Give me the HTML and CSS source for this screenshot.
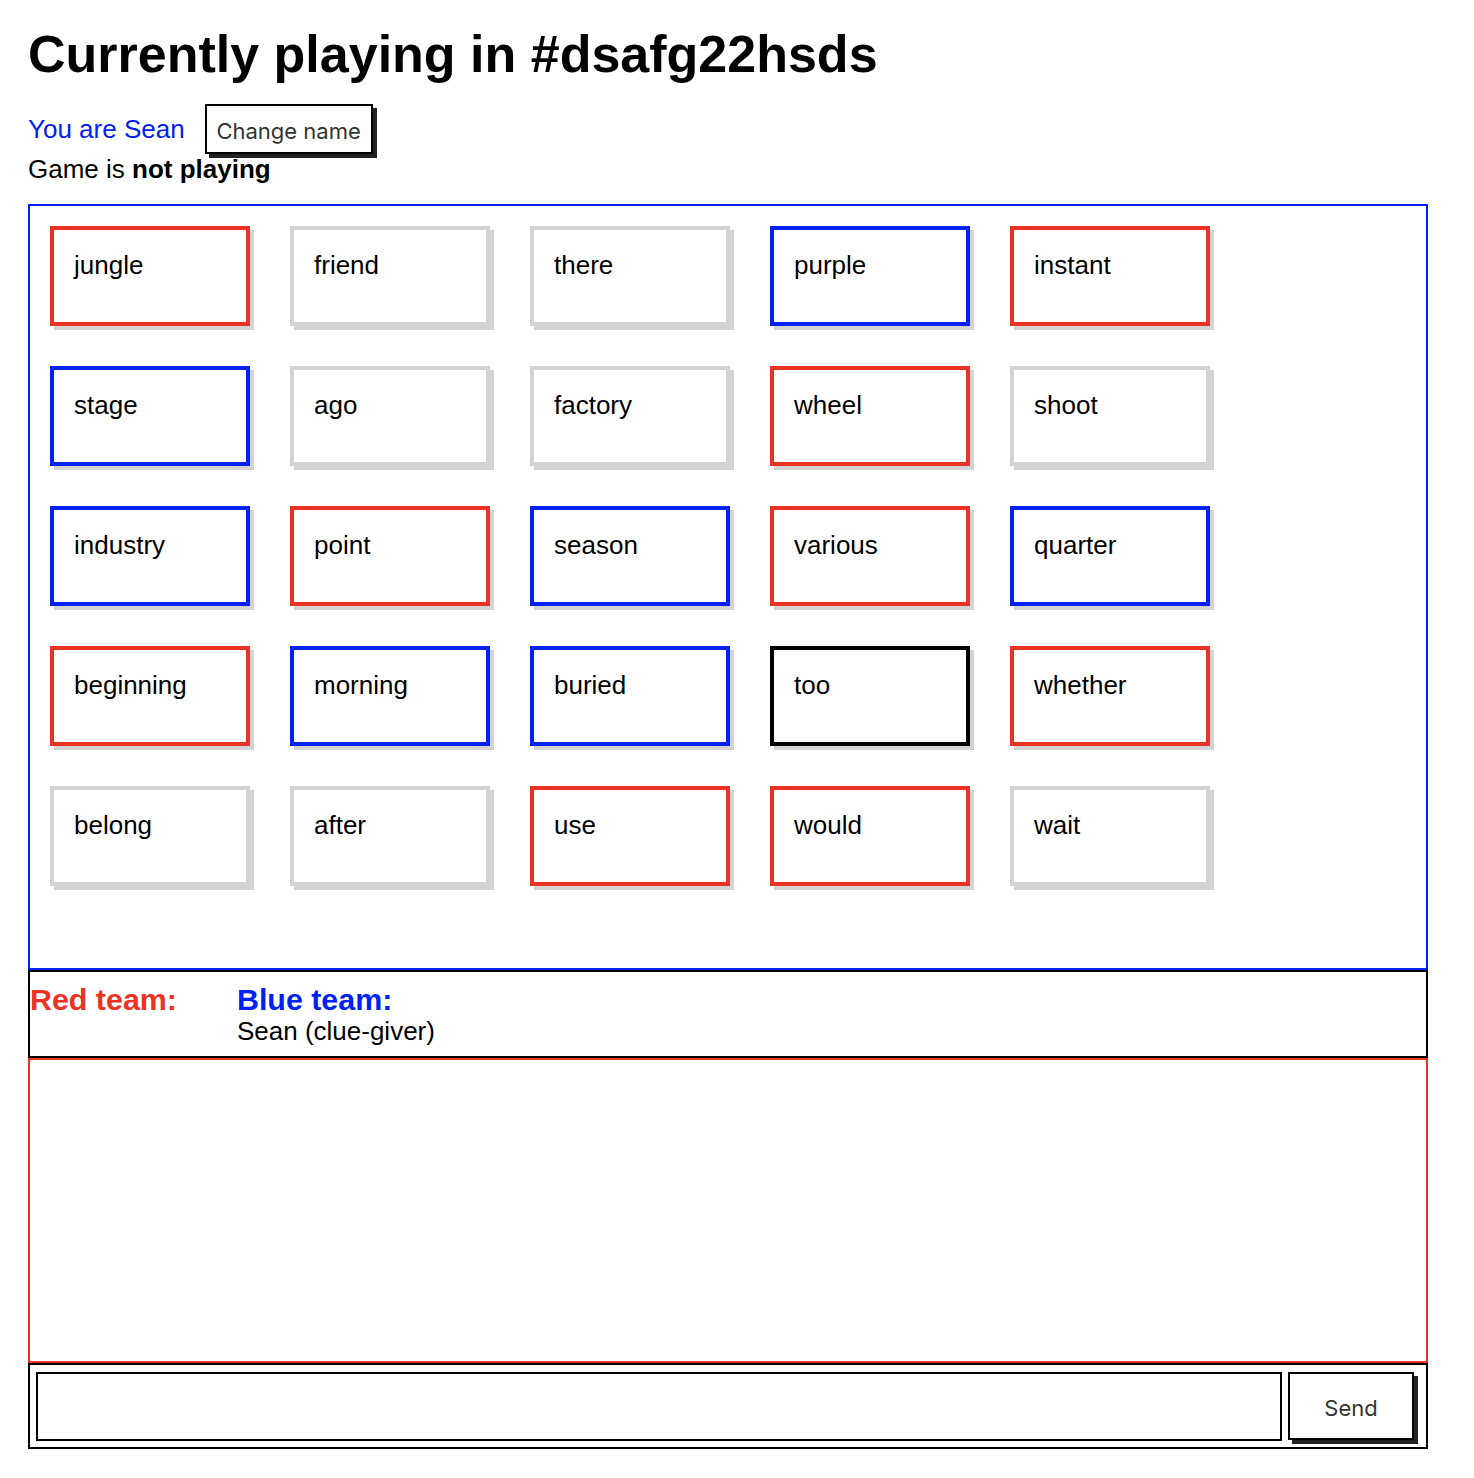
FILE: index.html
```html
<!DOCTYPE html>
<html lang="en">
<head>
<meta charset="utf-8">
<title>Codenames</title>
<link rel="stylesheet" href="styles.css">
</head>
<body>
<div class="page">
  <h1 class="title">Currently playing in #dsafg22hsds</h1>
  <div class="user-row">
    <span class="you">You are Sean</span>
    <button class="btn btn-name">Change name</button>
  </div>
  <div class="status">Game is <b>not playing</b></div>

  <div class="board">
    <div class="card red">jungle</div>
    <div class="card neutral">friend</div>
    <div class="card neutral">there</div>
    <div class="card blue">purple</div>
    <div class="card red">instant</div>

    <div class="card blue">stage</div>
    <div class="card neutral">ago</div>
    <div class="card neutral">factory</div>
    <div class="card red">wheel</div>
    <div class="card neutral">shoot</div>

    <div class="card blue">industry</div>
    <div class="card red">point</div>
    <div class="card blue">season</div>
    <div class="card red">various</div>
    <div class="card blue">quarter</div>

    <div class="card red">beginning</div>
    <div class="card blue">morning</div>
    <div class="card blue">buried</div>
    <div class="card assassin">too</div>
    <div class="card red">whether</div>

    <div class="card neutral">belong</div>
    <div class="card neutral">after</div>
    <div class="card red">use</div>
    <div class="card red">would</div>
    <div class="card neutral">wait</div>
  </div>

  <div class="teams">
    <div class="team team-red">
      <div class="team-title">Red team:</div>
    </div>
    <div class="team team-blue">
      <div class="team-title">Blue team:</div>
      <div class="member">Sean (clue-giver)</div>
    </div>
  </div>

  <div class="messages"></div>

  <div class="composer">
    <input class="chat-input" type="text">
    <button class="btn btn-send">Send</button>
  </div>
</div>
</body>
</html>
```

FILE: styles.css
```css
html, body {
  margin: 0;
  padding: 0;
  background: #ffffff;
}

body {
  font-family: "Liberation Sans", Arial, Helvetica, sans-serif;
  font-size: 26px;
  line-height: 30px;
  color: #000000;
}

.page {
  width: 1400px;
  padding: 24px 0 0 28px;
}

.title {
  margin: 0;
  font-size: 52px;
  line-height: 60px;
  font-weight: bold;
}

.user-row {
  display: flex;
  align-items: center;
  margin-top: 20px;
  height: 50px;
}

.you {
  color: #0021f5;
  margin-right: 20px;
}

.btn {
  font-family: Inter, "Noto Sans", sans-serif;
  background: #ffffff;
  color: #333333;
  border: 2px solid #000000;
  border-radius: 0;
  box-shadow: 4px 4px 0 #222222;
  box-sizing: border-box;
  padding: 3px 0 0 0;
  cursor: pointer;
}

.btn-name {
  width: 168px;
  height: 50px;
  font-size: 22px;
}

.status {
  height: 30px;
}

.board {
  margin-top: 20px;
  height: 766px;
  box-sizing: border-box;
  border: 2px solid #0021f5;
  padding: 20px;
  display: grid;
  grid-template-columns: repeat(5, 200px);
  grid-auto-rows: 100px;
  column-gap: 40px;
  row-gap: 40px;
  align-content: start;
}

.card {
  box-sizing: border-box;
  width: 200px;
  height: 100px;
  border: 4px solid #d3d3d3;
  padding: 20px 20px;
  box-shadow: 4px 4px 0 #d3d3d3;
  background: #ffffff;
}

.card.red { border-color: #ea3323; }
.card.blue { border-color: #0021f5; }
.card.assassin { border-color: #000000; }
.card.neutral { border-color: #d3d3d3; }

.teams {
  box-sizing: border-box;
  height: 88px;
  border: 2px solid #000000;
  padding: 10px 0;
  display: flex;
  gap: 60px;
}

.team-title {
  font-size: 30.4px;
  line-height: 34px;
  font-weight: bold;
}

.team-red .team-title { color: #ea3323; }
.team-blue .team-title { color: #0021f5; }

.messages {
  box-sizing: border-box;
  height: 305px;
  border: 2px solid #ea3323;
}

.composer {
  box-sizing: border-box;
  height: 86px;
  border: 2px solid #000000;
  padding: 7px 12px 6px 6px;
  display: flex;
  align-items: flex-start;
  gap: 6px;
}

.chat-input {
  flex: 1;
  height: 69px;
  box-sizing: border-box;
  border: 2px solid #000000;
  border-radius: 0;
  margin: 0;
  padding: 0 10px;
  font-family: "Liberation Sans", Arial, sans-serif;
  font-size: 20px;
  outline: none;
}

.btn-send {
  width: 126px;
  height: 68px;
  font-size: 22px;
}
```
